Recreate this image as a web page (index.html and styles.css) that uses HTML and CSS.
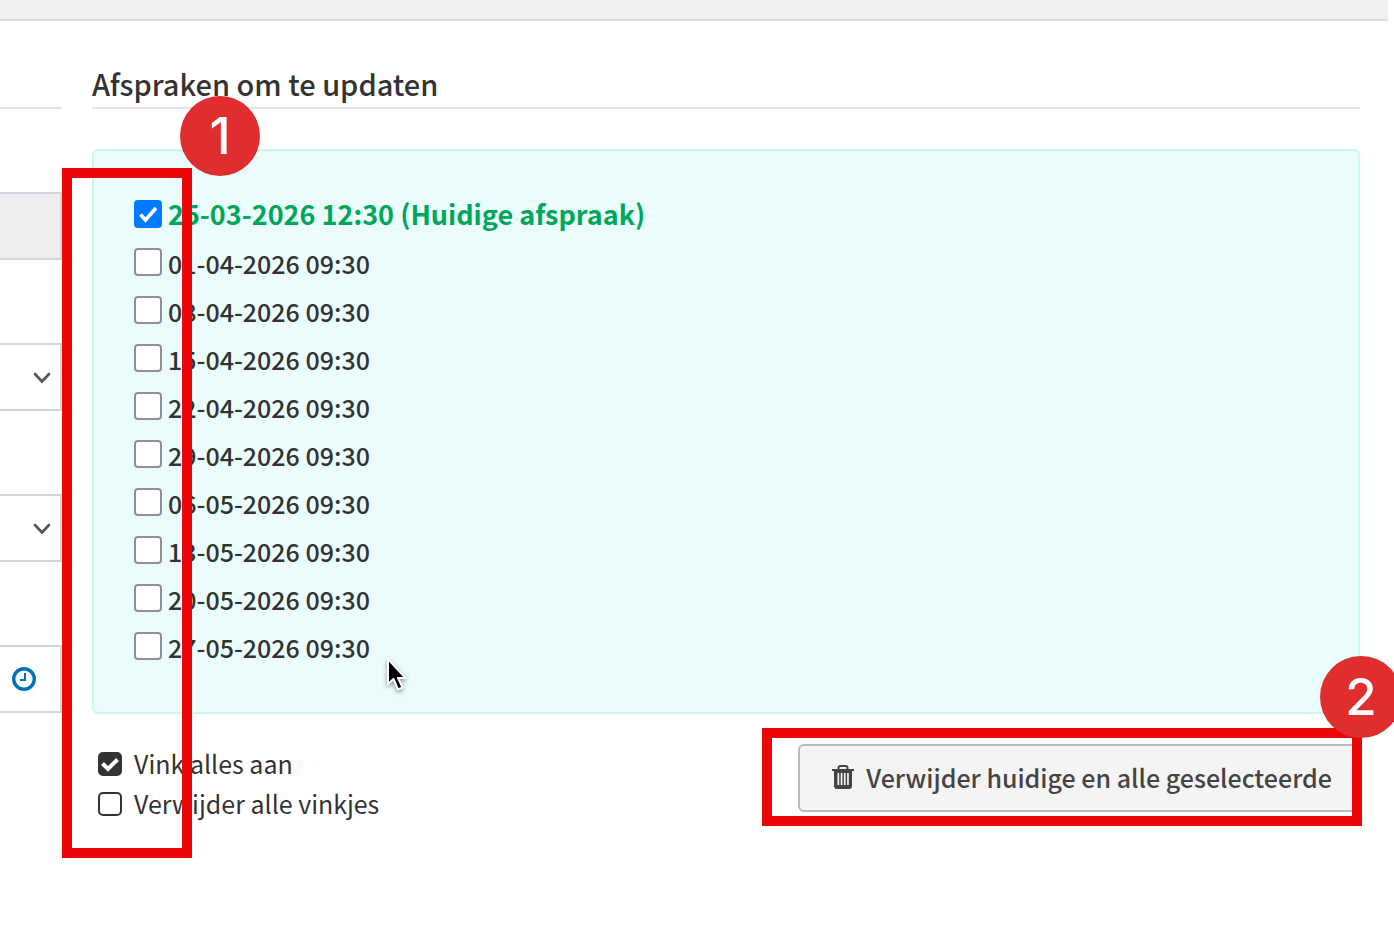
FILE: index.html
```html
<!DOCTYPE html>
<html lang="nl">
<head>
  <meta charset="UTF-8" />
  <meta name="viewport" content="width=device-width, initial-scale=1.0" />
  <title>Afspraken om te updaten</title>
  <link rel="stylesheet" href="styles.css">
</head>
<body>
  <header class="topbar"></header>

  <main class="layout">
    <section class="fields">
      <div class="fields-head"></div>
      <input class="field" type="text" aria-label="Naam" disabled>
      <div class="field-wrap">
        <select class="field" aria-label="Agenda"><option></option></select>
        <svg class="chevron" width="18" height="12" viewBox="0 0 18 12"><path d="M2 2l7 7.500 7-7.500" fill="none" stroke="#555" stroke-width="2.600" stroke-linecap="round"/></svg>
      </div>
      <div class="field-wrap">
        <select class="field" aria-label="Type afspraak"><option></option></select>
        <svg class="chevron" width="18" height="12" viewBox="0 0 18 12"><path d="M2 2l7 7.500 7-7.500" fill="none" stroke="#555" stroke-width="2.600" stroke-linecap="round"/></svg>
      </div>
      <div class="field-wrap">
        <input class="field" type="text" aria-label="Tijd">
        <svg class="clock" width="24" height="24" viewBox="0 0 24 24"><circle cx="12" cy="12" r="10.300" fill="none" stroke="#0073b7" stroke-width="3.400"/><path d="M13 6v7H8" fill="none" stroke="#0073b7" stroke-width="2"/></svg>
      </div>
    </section>

    <section class="updates">
      <h2>Afspraken om te updaten</h2>

      <div class="panel">
        <label class="row current"><input class="check" type="checkbox" checked>25-03-2026 12:30 (Huidige afspraak)</label>
        <label class="row"><input class="check" type="checkbox">01-04-2026 09:30</label>
        <label class="row"><input class="check" type="checkbox">08-04-2026 09:30</label>
        <label class="row"><input class="check" type="checkbox">15-04-2026 09:30</label>
        <label class="row"><input class="check" type="checkbox">22-04-2026 09:30</label>
        <label class="row"><input class="check" type="checkbox">29-04-2026 09:30</label>
        <label class="row"><input class="check" type="checkbox">06-05-2026 09:30</label>
        <label class="row"><input class="check" type="checkbox">13-05-2026 09:30</label>
        <label class="row"><input class="check" type="checkbox">20-05-2026 09:30</label>
        <label class="row"><input class="check" type="checkbox">27-05-2026 09:30</label>
        <svg class="cursor" width="28" height="40" viewBox="0 0 28 40"><path d="M3 3v25l5.500-5 4.500 10.500 4.500-2-4.500-9.500h7.500z" fill="#000" stroke="#fff" stroke-width="2" stroke-linejoin="round"/></svg>
      </div>

      <div class="actions">
        <div class="toggles">
          <label class="toggle"><input class="box" type="checkbox" checked>Vink alles aan</label>
          <label class="toggle"><input class="box" type="checkbox">Verwijder alle vinkjes</label>
        </div>
        <div class="delete">
          <button class="btn" type="button">
            <svg width="22" height="24" viewBox="0 0 22 24"><path d="M6.500 4.500V3Q6.500 1 8.500 1h5Q15.500 1 15.500 3v1.500" fill="none" stroke="#444" stroke-width="2"/><path d="M0 4h22v2H0z" fill="#444"/><path fill-rule="evenodd" d="M2 6h18v15q0 3-3 3H5q-3 0-3-3zM5.500 8v12h1.700V8zM8.700 8v12h1.700V8zM11.900 8v12h1.700V8zM15.100 8v12h1.700V8z" fill="#444"/></svg>
            Verwijder huidige en alle geselecteerde
          </button>
          <div class="frame frame-delete"></div>
          <div class="badge badge-two">2</div>
        </div>
      </div>

      <div class="frame frame-checks"></div>
      <div class="badge badge-one">1</div>
    </section>
  </main>
</body>
</html>
```
FILE: styles.css
```css
* {
  box-sizing: border-box;
}
body {
  font-family: "Noto Sans CJK JP", "Noto Sans", sans-serif;
  font-size: 25px;
  background-color: #fff;
  margin: 0;
  color: #333;
  overflow-x: hidden;
}
.topbar {
  height: 21px;
  margin-right: 6px;
  background-color: #f0f0f0;
  border-bottom: 2px solid #ddd;
}
.layout {
  display: grid;
  grid-template-columns: 62px 1fr;
  gap: 30px;
  padding: 40px 34px 80px 0;
}

/* left column, cut off by the window edge */
.fields {
  display: flex;
  flex-direction: column;
  gap: 83px;
}
.fields-head {
  height: 48px;
  border-bottom: 2px solid #e5e5e5;
}
.field-wrap {
  position: relative;
}
.field {
  display: block;
  appearance: none;
  width: 100%;
  height: 68px;
  margin: 0;
  border: 2px solid #d2d6de;
  border-left: none;
  border-radius: 0;
  background-color: #fff;
}
.field:disabled {
  background-color: #eee;
}
.chevron {
  position: absolute;
  right: 11px;
  top: 29px;
}
.clock {
  position: absolute;
  right: 26px;
  top: 22px;
}

/* appointments */
.updates {
  position: relative;
}
h2 {
  height: 48px;
  margin: 0 0 40px;
  border-bottom: 2px solid #e5e5e5;
  font-size: 29px;
  font-weight: 500;
  line-height: 44px;
}
.panel {
  position: relative;
  display: flex;
  flex-direction: column;
  align-items: flex-start;
  padding: 40px;
  border: 2px solid #ccf7f1;
  border-radius: 6px;
  background-color: #eafcfb;
}
.row {
  display: flex;
  align-items: center;
  gap: 6px;
  height: 48px;
  padding-bottom: 2px;
  font-weight: 500;
}
.check {
  appearance: none;
  width: 28px;
  height: 28px;
  margin: 0 0 2px;
  border: 2px solid #8f8f9d;
  border-radius: 4px;
  background-color: #fff;
}
.check:checked {
  border-color: #007aff;
  background: #007aff url("data:image/svg+xml,%3Csvg xmlns='http://www.w3.org/2000/svg' viewBox='0 0 24 24'%3E%3Cpath d='M4.500 12.500l5 5.500L20 6' fill='none' stroke='white' stroke-width='3.600'/%3E%3C/svg%3E") center / 24px no-repeat;
}
.current {
  height: 49px;
  padding-bottom: 4px;
  color: #00a65a;
  font-size: 27px;
  font-weight: 700;
}
.current .check {
  margin-bottom: 0;
}
.cursor {
  position: absolute;
  left: 291px;
  top: 505px;
  filter: drop-shadow(0 2px 2px rgba(0,0,0,0.4));
}

.actions {
  display: flex;
  justify-content: space-between;
  align-items: flex-start;
  padding-top: 30px;
}
.toggles {
  padding-left: 6px;
}
.toggle {
  display: flex;
  align-items: center;
  gap: 12px;
  height: 40px;
  padding-bottom: 2px;
}
.box {
  appearance: none;
  width: 24px;
  height: 24px;
  margin: 2px 0 0;
  border: 2px solid #333;
  border-radius: 5px;
}
.box:checked {
  background: #333 url("data:image/svg+xml,%3Csvg xmlns='http://www.w3.org/2000/svg' viewBox='0 0 20 20'%3E%3Cpath d='M2.500 9.500l5.500 5.500L17.500 5.500' fill='none' stroke='white' stroke-width='4'/%3E%3C/svg%3E") center / 20px no-repeat;
}
.delete {
  position: relative;
}
.btn {
  display: flex;
  align-items: center;
  gap: 12px;
  height: 68px;
  padding: 0 26px 2px 32px;
  border: 2px solid #bbb;
  border-radius: 6px;
  background-color: #f4f4f4;
  color: #444;
  font-family: inherit;
  font-size: 25px;
  font-weight: 500;
}

/* red markers over the page */
.frame {
  position: absolute;
  border: 10px solid #eb0707;
  pointer-events: none;
}
.frame-checks {
  left: -30px;
  top: 107px;
  width: 130px;
  height: 690px;
}
.frame-delete {
  inset: -16px -2px -14px -36px;
}
.badge {
  position: absolute;
  width: 80px;
  height: 80px;
  border-radius: 50%;
  background-color: #e02d2d;
  color: #fff;
  font-family: Inter, "Liberation Sans", sans-serif;
  font-size: 51px;
  font-weight: 500;
  line-height: 80px;
  text-align: center;
}
.badge-one {
  left: 88px;
  top: 35px;
}
.badge-two {
  right: -42px;
  top: -88px;
  width: 82px;
  height: 82px;
  line-height: 82px;
}
```
